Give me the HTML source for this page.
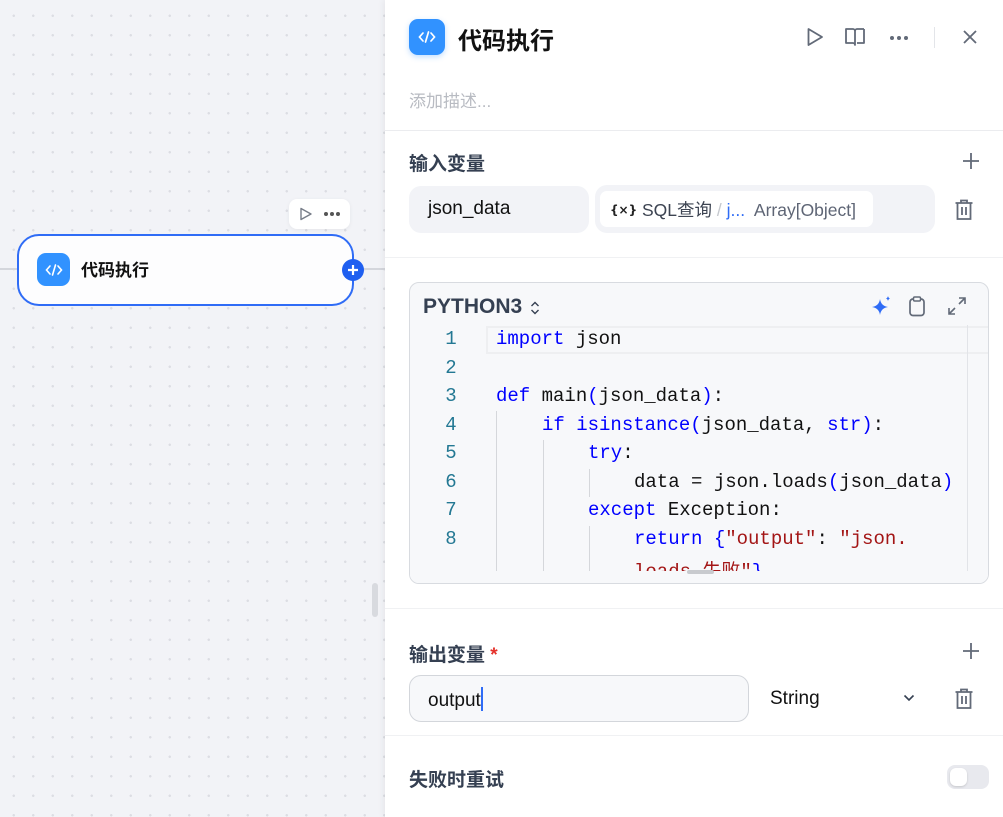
<!DOCTYPE html>
<html><head><meta charset="utf-8"><style>
*{box-sizing:border-box;margin:0;padding:0}
body{width:1003px;height:817px;overflow:hidden;position:relative;font-family:"Liberation Sans","Noto Sans CJK SC",sans-serif;background:#f2f3f7;
background-image:radial-gradient(circle,#dcdde3 1.1px,transparent 1.3px);background-size:19.5px 19.5px;background-position:4px 6px}
.abs{position:absolute}
.panel{left:385px;top:0;width:618px;height:817px;background:#fff;box-shadow:-2px 0 6px rgba(0,0,0,.05)}
.ico{border-radius:9px;background:#3192ff;display:flex;align-items:center;justify-content:center}
.h{font-weight:bold;color:#354052;font-size:19px}
.ln{position:absolute;left:0;width:82px;text-align:center;color:#237893;font-family:"Liberation Mono",monospace;font-size:19px}
.cl{position:absolute;white-space:pre;color:#111;font-family:"Liberation Mono","Noto Sans CJK SC",monospace;font-size:19px}
.k{color:#0000ff}.s{color:#a31515}
</style></head><body>
<div class="abs" style="left:0;top:268px;width:385px;height:2px;background:#d4d6dc"></div>
<div class="abs" style="left:372px;top:583px;width:6px;height:34px;border-radius:3px;background:#d8dadf"></div>
<div class="abs" style="left:289px;top:199px;width:61px;height:30px;background:#fff;border-radius:8px;box-shadow:0 1px 4px rgba(0,0,0,.06)">
<svg class="abs" style="left:10px;top:8px" width="14" height="14" viewBox="0 0 14 14"><path d="M2 1.5L12 7 2 12.5Z" fill="none" stroke="#777d88" stroke-width="1.4" stroke-linejoin="round"/></svg>
<div class="abs" style="left:35px;top:13px;width:4px;height:4px;border-radius:2px;background:#555;box-shadow:6px 0 #555,12px 0 #555"></div>
</div>
<div class="abs" style="left:17px;top:234px;width:337px;height:72px;border:2.5px solid #2f6cf6;border-radius:22px;background:#fdfdfe"></div>
<div class="abs ico" style="left:37px;top:253px;width:33px;height:33px"><svg width="18" height="14" viewBox="0 0 18 14"><path d="M5 3L1.5 7 5 11M13 3l3.5 4L13 11M10.5 2L7.5 12" fill="none" stroke="#fff" stroke-width="1.6" stroke-linecap="round"/></svg></div>
<div class="abs" style="left:81px;top:256px;font-size:17px;font-weight:bold;color:#111">代码执行</div>
<div class="abs" style="left:342px;top:259px;width:22px;height:22px;border-radius:11px;background:#1f5ff0;color:#fff;display:flex;align-items:center;justify-content:center"><svg width="12" height="12"><path d="M6 1v10M1 6h10" stroke="#fff" stroke-width="2.2"/></svg></div>
<div class="abs panel">
<div class="abs ico" style="left:24px;top:19px;width:36px;height:36px;box-shadow:0 2px 6px rgba(49,146,255,.3)"><svg width="20" height="16" viewBox="0 0 20 16"><path d="M6 4L2.5 8 6 12M14 4l3.5 4L14 12M11.5 3L8.5 13" fill="none" stroke="#fff" stroke-width="1.7" stroke-linecap="round"/></svg></div>
<div class="abs" style="left:73px;top:21px;font-size:24px;font-weight:bold;color:#111">代码执行</div>
<svg class="abs" style="left:421px;top:27px" width="18" height="20" viewBox="0 0 18 20"><path d="M2.5 2L16 10 2.5 18Z" fill="none" stroke="#626a78" stroke-width="1.8" stroke-linejoin="round"/></svg>
<svg class="abs" style="left:459px;top:27px" width="22" height="20" viewBox="0 0 22 20"><path d="M2 2h7a2 2 0 0 1 2 2v14a2 2 0 0 0-2-2H2ZM20 2h-7a2 2 0 0 0-2 2M20 2v14h-7" fill="none" stroke="#626a78" stroke-width="1.8" stroke-linejoin="round"/></svg>
<div class="abs" style="left:505px;top:36px;width:4px;height:4px;border-radius:2px;background:#626a78;box-shadow:7px 0 #626a78,14px 0 #626a78"></div>
<div class="abs" style="left:549px;top:27px;width:1px;height:21px;background:#e3e5e9"></div>
<svg class="abs" style="left:577px;top:29px" width="16" height="16"><path d="M2 2l12 12M14 2L2 14" stroke="#626a78" stroke-width="1.8"/></svg>
<div class="abs" style="left:24px;top:87px;font-size:17px;color:#b8bbc2">添加描述...</div>
<div class="abs" style="left:0;top:130px;width:618px;height:1px;background:#ebecef"></div>
<div class="abs h" style="left:24px;top:149px">输入变量</div>
<svg class="abs" style="left:577px;top:152px" width="18" height="18"><path d="M9 1v16M1 9h16" stroke="#626a78" stroke-width="1.8"/></svg>
<div class="abs" style="left:24px;top:186px;width:180px;height:47px;background:#f2f3f7;border-radius:12px;padding:12px 19px;font-size:19px;color:#111">json_data</div>
<div class="abs" style="left:210px;top:185px;width:340px;height:48px;background:#f2f3f7;border-radius:12px"></div>
<div class="abs" style="left:215px;top:191px;width:273px;height:36px;background:#fff;border-radius:7px;font-size:17.5px;white-space:nowrap;padding:6px 10px;color:#3d4452"><b style="font-size:12px;color:#222;font-family:'DejaVu Sans';vertical-align:2px">{×}</b> SQL查询 <span style="color:#c5c8ce">/</span> <span style="color:#2f6cf6">j...</span>&nbsp; <span style="color:#5e6575">Array[Object]</span></div>
<svg class="abs" style="left:569px;top:199px" width="20" height="22" viewBox="0 0 20 22"><path d="M1.5 4h17M7 4V1.5h6V4M3.5 4v16h13V4M8 8v8M12 8v8" fill="none" stroke="#626a78" stroke-width="1.8"/></svg>
<div class="abs" style="left:0;top:257px;width:618px;height:1px;background:#f0f1f3"></div>
<div class="abs" style="left:24px;top:282px;width:580px;height:302px;border:1px solid #d8dbe0;border-radius:10px;background:#f7f8fa;overflow:hidden">
<div class="abs" style="left:13px;top:12px;font-size:21px;font-weight:bold;color:#354052">PYTHON3</div>
<svg class="abs" style="left:120px;top:17px" width="10" height="16"><path d="M1.5 6L5 2.5 8.5 6M1.5 10L5 13.5 8.5 10" fill="none" stroke="#354052" stroke-width="1.4"/></svg>
<svg class="abs" style="left:461px;top:12px" width="22" height="22" viewBox="0 0 22 22"><path d="M9 4Q10 11 17 12Q10 13 9 20Q8 13 1 12Q8 11 9 4Z" fill="#2f6cf6"/><path d="M17 1Q17.4 3 19 3.5Q17.4 4 17 6Q16.6 4 15 3.5Q16.6 3 17 1Z" fill="#2f6cf6"/></svg>
<svg class="abs" style="left:498px;top:13px" width="18" height="21" viewBox="0 0 18 21"><rect x="2" y="3" width="14" height="16.5" rx="3" fill="none" stroke="#626a78" stroke-width="1.7"/><rect x="5.5" y="1" width="7" height="4" rx="1.2" fill="#f7f8fa" stroke="#626a78" stroke-width="1.5"/></svg>
<svg class="abs" style="left:537px;top:13px" width="20" height="20"><path d="M12 2h6v6M18 2l-6 6M8 18H2v-6M2 18l6-6" fill="none" stroke="#626a78" stroke-width="1.6"/></svg>
<div class="abs" style="left:0;top:42px;width:580px;height:260px;background:#f7f8fa">
<div class="abs" style="left:76px;top:1px;width:504px;height:28px;border:2px solid #eeeff1"></div>
<div class="abs" style="left:557px;top:0;width:1px;height:246px;background:#e2e4e8"></div>
<div class="abs" style="left:86px;top:86px;width:1px;height:160px;background:#d5d7db"></div>
<div class="abs" style="left:133px;top:115px;width:1px;height:131px;background:#d5d7db"></div>
<div class="abs" style="left:179px;top:144px;width:1px;height:28px;background:#d5d7db"></div>
<div class="abs" style="left:179px;top:201px;width:1px;height:45px;background:#d5d7db"></div>
<div class="ln" style="top:3px">1</div><div class="ln" style="top:32px">2</div><div class="ln" style="top:60px">3</div><div class="ln" style="top:89px">4</div><div class="ln" style="top:117px">5</div><div class="ln" style="top:146px">6</div><div class="ln" style="top:174px">7</div><div class="ln" style="top:203px">8</div>
<div class="cl" style="left:86px;top:3px"><span class="k">import</span> json</div>
<div class="cl" style="left:86px;top:60px"><span class="k">def</span> main<span class="k">(</span>json_data<span class="k">)</span>:</div>
<div class="cl" style="left:132px;top:89px"><span class="k">if isinstance(</span>json_data, <span class="k">str)</span>:</div>
<div class="cl" style="left:178px;top:117px"><span class="k">try</span>:</div>
<div class="cl" style="left:224px;top:146px">data = json.loads<span class="k">(</span>json_data<span class="k">)</span></div>
<div class="cl" style="left:178px;top:174px"><span class="k">except</span> Exception:</div>
<div class="cl" style="left:224px;top:203px"><span class="k">return {</span><span class="s">"output"</span>: <span class="s">"json.</span></div>
<div class="cl" style="left:224px;top:231px"><span class="s">loads_失败"</span><span class="k">}</span></div>
<div class="abs" style="left:0;top:246px;width:580px;height:20px;background:#f7f8fa"></div>
<div class="abs" style="left:277px;top:245px;width:27px;height:4px;background:#c8cace;border-radius:2px"></div>
</div>
</div>
<div class="abs" style="left:0;top:608px;width:618px;height:1px;background:#f0f1f3"></div>
<div class="abs h" style="left:24px;top:640px">输出变量 <span style="color:#e5312b">*</span></div>
<svg class="abs" style="left:577px;top:642px" width="18" height="18"><path d="M9 1v16M1 9h16" stroke="#626a78" stroke-width="1.8"/></svg>
<div class="abs" style="left:24px;top:675px;width:340px;height:47px;background:#f7f8fa;border:1px solid #d3d6db;border-radius:12px;padding:11px 18px;font-size:19px;color:#111">output<span style="display:inline-block;width:2px;height:24px;background:#2f6cf6;vertical-align:-5px"></span></div>
<div class="abs" style="left:385px;top:688px;font-size:19px;color:#111">String</div>
<svg class="abs" style="left:518px;top:694px" width="12" height="8"><path d="M1.5 1.5L6 6l4.5-4.5" fill="none" stroke="#354052" stroke-width="1.6"/></svg>
<svg class="abs" style="left:569px;top:688px" width="20" height="22" viewBox="0 0 20 22"><path d="M1.5 4h17M7 4V1.5h6V4M3.5 4v16h13V4M8 8v8M12 8v8" fill="none" stroke="#626a78" stroke-width="1.8"/></svg>
<div class="abs" style="left:0;top:735px;width:618px;height:1px;background:#f0f1f3"></div>
<div class="abs h" style="left:24px;top:765px">失败时重试</div>
<div class="abs" style="left:562px;top:765px;width:42px;height:24px;border-radius:8px;background:#e8e9ee"><div class="abs" style="left:3px;top:3px;width:17px;height:18px;border-radius:6px;background:#fff;box-shadow:0 1px 2px rgba(0,0,0,.15)"></div></div>
</div>
</body></html>
